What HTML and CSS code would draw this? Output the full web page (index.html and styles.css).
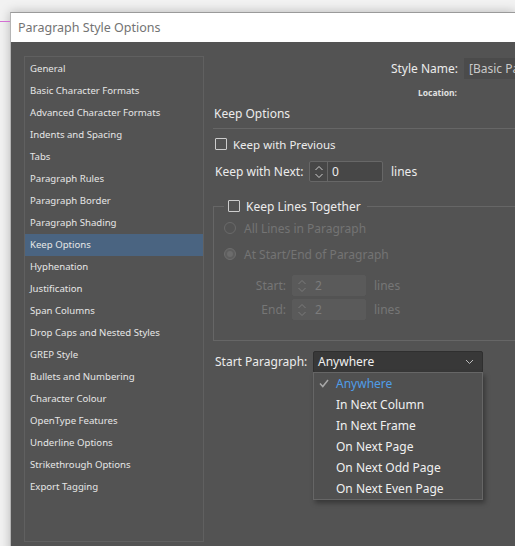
FILE: index.html
```html
<!DOCTYPE html>
<html>
<head>
<meta charset="utf-8">
<link rel="stylesheet" href="styles.css">
</head>
<body>
<div class="page">
  <div class="guide"></div>
  <div class="dialog">
    <div class="titlebar">Paragraph Style Options</div>
    <div class="body">
      <ul class="sidebar">
        <li>General</li>
        <li>Basic Character Formats</li>
        <li>Advanced Character Formats</li>
        <li>Indents and Spacing</li>
        <li>Tabs</li>
        <li>Paragraph Rules</li>
        <li>Paragraph Border</li>
        <li>Paragraph Shading</li>
        <li class="selected">Keep Options</li>
        <li>Hyphenation</li>
        <li>Justification</li>
        <li>Span Columns</li>
        <li>Drop Caps and Nested Styles</li>
        <li>GREP Style</li>
        <li>Bullets and Numbering</li>
        <li>Character Colour</li>
        <li>OpenType Features</li>
        <li>Underline Options</li>
        <li>Strikethrough Options</li>
        <li>Export Tagging</li>
      </ul>
      <div class="main">
        <div class="row stylename">
          <span class="rlabel">Style Name:</span>
          <span class="namebox">[Basic Pa</span>
        </div>
        <div class="row location">
          <span class="rlabel small">Location:</span>
        </div>
        <div class="section-title">Keep Options</div>
        <label class="row check-row prev">
          <span class="checkbox"></span><span>Keep with Previous</span>
        </label>
        <div class="row next">
          <span class="lbl">Keep with Next:</span>
          <span class="spinner">
            <span class="stepper">
              <svg width="10" height="16" viewBox="0 0 10 16"><path d="M1.5 6 L5 2.5 L8.5 6 M1.5 10 L5 13.5 L8.5 10" fill="none" stroke="#cfcfcf" stroke-width="1"/></svg>
            </span>
            <span class="value">0</span>
          </span>
          <span class="unit">lines</span>
        </div>
        <fieldset class="group">
          <legend><span class="checkbox"></span><span>Keep Lines Together</span></legend>
          <div class="row radio-row first">
            <span class="radio"></span><span>All Lines in Paragraph</span>
          </div>
          <div class="row radio-row second">
            <span class="radio on"></span><span>At Start/End of Paragraph</span>
          </div>
          <div class="row sub start">
            <span class="sublbl">Start:</span>
            <span class="spinner dis">
              <span class="stepper">
                <svg width="10" height="16" viewBox="0 0 10 16"><path d="M1.5 6 L5 2.5 L8.5 6 M1.5 10 L5 13.5 L8.5 10" fill="none" stroke="#7a7a7a" stroke-width="1"/></svg>
              </span>
              <span class="value">2</span>
            </span>
            <span class="unit">lines</span>
          </div>
          <div class="row sub end">
            <span class="sublbl">End:</span>
            <span class="spinner dis">
              <span class="stepper">
                <svg width="10" height="16" viewBox="0 0 10 16"><path d="M1.5 6 L5 2.5 L8.5 6 M1.5 10 L5 13.5 L8.5 10" fill="none" stroke="#7a7a7a" stroke-width="1"/></svg>
              </span>
              <span class="value">2</span>
            </span>
            <span class="unit">lines</span>
          </div>
        </fieldset>
        <div class="row startpara">
          <span class="lbl">Start Paragraph:</span>
          <div class="dropwrap">
            <div class="dropdown">
              <span>Anywhere</span>
              <svg width="9" height="6" viewBox="0 0 9 6"><path d="M1 1 L4.5 4.5 L8 1" fill="none" stroke="#bdbdbd" stroke-width="1"/></svg>
            </div>
            <ul class="menu">
              <li class="current"><svg class="tick" width="10" height="9" viewBox="0 0 10 9"><path d="M1 4.5 L3.8 7.5 L9 1" fill="none" stroke="#a8a8a8" stroke-width="1.5"/></svg>Anywhere</li>
              <li>In Next Column</li>
              <li>In Next Frame</li>
              <li>On Next Page</li>
              <li>On Next Odd Page</li>
              <li>On Next Even Page</li>
            </ul>
          </div>
        </div>
      </div>
    </div>
  </div>
</div>
</body>
</html>
```
FILE: styles.css
```css
* { box-sizing: border-box; }
html, body { margin: 0; padding: 0; }
body {
  width: 515px;
  height: 546px;
  overflow: hidden;
  background: #f2f2f2;
  font-family: "Noto Sans", "Open Sans", sans-serif;
  font-size: 11.5px;
  color: #ececec;
}
.page {
  position: relative;
  padding: 12px 0 0 10px;
}
.guide {
  position: absolute;
  left: 0;
  top: 21px;
  width: 10px;
  height: 1px;
  background: #d36fd3;
}
.dialog {
  width: 505px;
  height: 560px;
  border-top: 1px solid #9a9a9a;
  border-left: 1px solid #b4b4b4;
  box-shadow: 0 0 10px rgba(0,0,0,0.25);
  overflow: hidden;
}
.titlebar {
  height: 29px;
  background: #ffffff;
  color: #737373;
  font-size: 12.5px;
  line-height: 29px;
  padding-left: 7px;
}
.body {
  background: #535353;
  height: 520px;
  display: flex;
  align-items: flex-start;
  padding: 14px 0 0 13px;
}
.sidebar {
  list-style: none;
  margin: 0;
  padding: 1px 0 0 0;
  width: 180px;
  height: 486px;
  border: 1px solid #606060;
  flex: none;
}
.sidebar li {
  height: 22px;
  line-height: 22px;
  padding-left: 5px;
  font-size: 9.6px;
  color: #e6e6e6;
  white-space: nowrap;
}
.sidebar li.selected {
  background: #4a6481;
}
.main {
  margin-left: 9px;
  flex: 1;
  min-width: 0;
  display: flex;
  flex-direction: column;
}
.row {
  display: flex;
  align-items: center;
}
.rlabel {
  width: 245px;
  text-align: right;
  font-size: 12px;
  flex: none;
}
.stylename {
  margin-top: 2px;
  height: 21px;
}
.namebox {
  margin-left: 6px;
  height: 21px;
  line-height: 21px;
  flex: 1;
  background: #4b4b4b;
  color: #c9c9c9;
  padding-left: 5px;
  font-size: 12px;
  white-space: nowrap;
  overflow: hidden;
}
.location {
  margin-top: 6px;
  height: 14px;
}
.rlabel.small {
  width: 244px;
  font-size: 8.5px;
  font-weight: bold;
  color: #e0e0e0;
}
.section-title {
  margin-top: 6px;
  height: 24px;
  line-height: 18px;
  border-bottom: 1px solid #666;
  padding-left: 1px;
  font-size: 12px;
}
.checkbox {
  width: 12px;
  height: 12px;
  border: 1px solid #cdcdcd;
  border-radius: 1px;
  flex: none;
  margin-right: 6px;
}
.check-row.prev {
  margin-top: 7px;
  height: 16px;
  padding-left: 2px;
}
.next {
  margin-top: 9px;
  height: 21px;
  padding-left: 2px;
}
.lbl { font-size: 12px; }
.next .lbl { width: 94px; }
.spinner {
  display: flex;
  align-items: stretch;
  width: 74px;
  height: 21px;
  background: #474747;
  border: 1px solid #676767;
  border-radius: 2px;
}
.stepper {
  width: 18px;
  border-right: 1px solid #676767;
  display: flex;
  align-items: center;
  justify-content: center;
}
.value {
  padding-left: 4px;
  line-height: 19px;
  font-size: 12px;
}
.unit {
  margin-left: 8px;
  font-size: 12px;
}
.group {
  margin: 16px 0 0 0;
  padding: 0 0 0 10px;
  height: 143px;
  border: 1px solid #666;
  border-right: none;
  min-width: 0;
}
.group legend {
  display: flex;
  align-items: center;
  padding: 0 6px 0 4px;
  margin-left: 0;
  height: 16px;
  font-size: 12px;
}
.radio {
  width: 12px;
  height: 12px;
  border-radius: 50%;
  border: 1px solid #6a6a6a;
  margin-right: 8px;
  flex: none;
  display: flex;
  align-items: center;
  justify-content: center;
}
.radio.on::after {
  content: "";
  width: 6px;
  height: 6px;
  border-radius: 50%;
  background: #6c6c6c;
}
.radio.on { background: #5e5e5e; border-color: #6e6e6e; }
.radio-row {
  height: 16px;
  color: #747474;
  font-size: 12px;
}
.radio-row.first { margin-top: 6px; }
.radio-row.second { margin-top: 10px; }
.sub {
  color: #767676;
  font-size: 12px;
}
.sub.start { margin-top: 13px; }
.sub.end { margin-top: 3px; }
.sublbl {
  width: 62px;
  text-align: right;
  margin-right: 6px;
}
.spinner.dis {
  background: #5a5a5a;
  border-color: #5a5a5a;
  color: #7c7c7c;
}
.spinner.dis .stepper { border-right-color: #5a5a5a; }
.startpara {
  margin-top: 10px;
  height: 21px;
  padding-left: 2px;
}
.startpara .lbl { width: 98px; }
.dropwrap {
  position: relative;
}
.dropdown {
  width: 170px;
  height: 22px;
  background: #383838;
  border: 1px solid #2f2f2f;
  border-radius: 2px;
  display: flex;
  align-items: center;
  justify-content: space-between;
  padding: 0 8px 0 4px;
  font-size: 12px;
  color: #f0f0f0;
}
.menu {
  position: absolute;
  left: 0;
  top: 21px;
  width: 170px;
  margin: 0;
  padding: 0;
  list-style: none;
  background: #505050;
  border: 1px solid #666;
  box-shadow: 2px 3px 5px rgba(0,0,0,0.35);
  z-index: 2;
}
.menu li {
  height: 21px;
  line-height: 21px;
  padding-left: 22px;
  font-size: 12px;
  color: #f0f0f0;
  position: relative;
}
.menu li.current { color: #4f9de8; }
.tick {
  position: absolute;
  left: 5px;
  top: 6px;
}
```
